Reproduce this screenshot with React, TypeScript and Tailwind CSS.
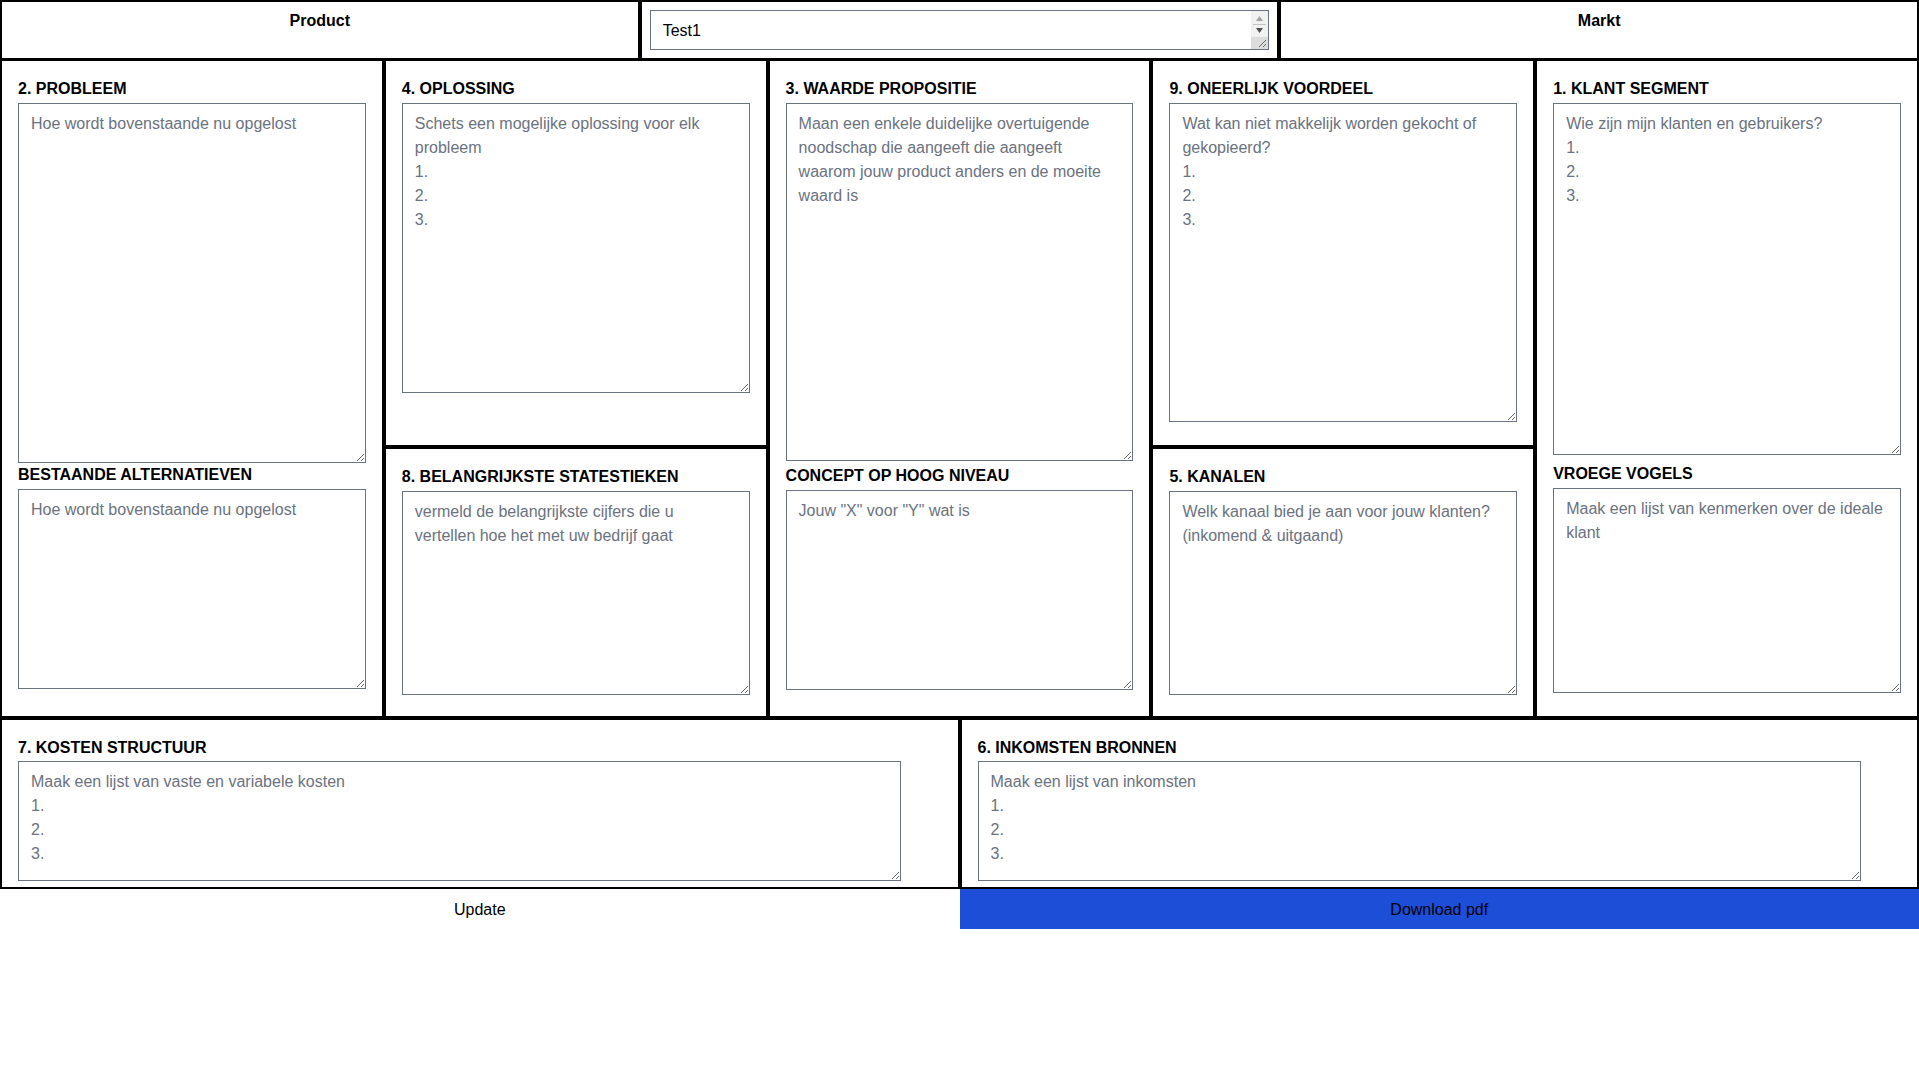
import React from 'react';

const boxCls =
  'block w-full border border-[#6b7280] bg-white px-3 py-2 text-base leading-6 text-black placeholder:text-[#6b7280] focus:outline-none';

function Field({
  label,
  placeholder,
  height,
}: {
  label: string;
  placeholder: string;
  height: string;
}) {
  return (
    <>
      <div className="h-6 text-base font-bold leading-6 text-black">{label}</div>
      <textarea className={`${boxCls} mt-0.5 ${height}`} placeholder={placeholder} />
    </>
  );
}

// classic scrollbar look of the name box (headless chrome hides its own)
function FakeScrollbar() {
  return (
    <div className="pointer-events-none absolute bottom-px right-px top-px flex w-[17px] flex-col bg-[#f1f1f1]">
      <div className="flex h-[11px] items-end justify-center">
        <svg width="7" height="5" viewBox="0 0 7 5">
          <path d="M3.5 0 L7 5 L0 5 Z" fill="#a3a3a3" />
        </svg>
      </div>
      <div className="mx-0.5 my-[3px] h-px bg-[#c4c4c4]" />
      <div className="flex h-[5px] items-start justify-center">
        <svg width="7" height="5" viewBox="0 0 7 5">
          <path d="M0 0 L7 0 L3.5 5 Z" fill="#505050" />
        </svg>
      </div>
      <div className="mt-1 flex flex-1 items-end justify-end bg-[#dcdcdc] p-px">
        <svg width="10" height="10" viewBox="0 0 10 10">
          <path d="M9 2 L2 9 M9 6 L6 9" stroke="#6b6b6b" strokeWidth="1" />
        </svg>
      </div>
    </div>
  );
}

export default function App() {
  return (
    <div className="min-h-screen w-full bg-white font-['Liberation_Sans',Arial,sans-serif] text-black">
      {/* header row */}
      <div className="grid h-[59px] grid-cols-3">
        <div className="border-2 border-black pt-[7px] text-center text-base font-bold leading-6">Product</div>
        <div className="border-2 border-black p-2">
          <div className="relative">
            <textarea
              className="block h-10 w-full resize overflow-hidden border border-[#6b7280] bg-white py-2 pl-3 pr-6 text-base leading-6 text-black focus:outline-none"
              defaultValue="Test1"
            />
            <FakeScrollbar />
          </div>
        </div>
        <div className="border-2 border-black pt-[7px] text-center text-base font-bold leading-6">Markt</div>
      </div>

      {/* canvas */}
      <div className="grid h-[659px] grid-cols-5">
        <div className="flex flex-col border-2 border-black p-4">
          <Field label="2. PROBLEEM" placeholder="Hoe wordt bovenstaande nu opgelost" height="h-[360px]" />
          <Field label="BESTAANDE ALTERNATIEVEN" placeholder="Hoe wordt bovenstaande nu opgelost" height="h-[200px]" />
        </div>

        <div className="flex flex-col">
          <div className="h-[388px] border-2 border-black p-4">
            <Field
              label="4. OPLOSSING"
              placeholder={'Schets een mogelijke oplossing voor elk probleem\n1.\n2.\n3.'}
              height="h-[290px]"
            />
          </div>
          <div className="flex-1 border-2 border-black p-4">
            <Field
              label="8. BELANGRIJKSTE STATESTIEKEN"
              placeholder="vermeld de belangrijkste cijfers die u vertellen hoe het met uw bedrijf gaat"
              height="h-[204px]"
            />
          </div>
        </div>

        <div className="flex flex-col border-2 border-black p-4">
          <Field
            label="3. WAARDE PROPOSITIE"
            placeholder="Maan een enkele duidelijke overtuigende noodschap die aangeeft die aangeeft waarom jouw product anders en de moeite waard is"
            height="h-[358px]"
          />
          <div className="pt-[3px]" />
          <Field label="CONCEPT OP HOOG NIVEAU" placeholder={'Jouw "X" voor "Y" wat is'} height="h-[200px]" />
        </div>

        <div className="flex flex-col">
          <div className="h-[388px] border-2 border-black p-4">
            <Field
              label="9. ONEERLIJK VOORDEEL"
              placeholder={'Wat kan niet makkelijk worden gekocht of gekopieerd?\n1.\n2.\n3.'}
              height="h-[319px]"
            />
          </div>
          <div className="flex-1 border-2 border-black p-4">
            <Field
              label="5. KANALEN"
              placeholder="Welk kanaal bied je aan voor jouw klanten? (inkomend & uitgaand)"
              height="h-[204px]"
            />
          </div>
        </div>

        <div className="flex flex-col border-2 border-black p-4">
          <Field
            label="1. KLANT SEGMENT"
            placeholder={'Wie zijn mijn klanten en gebruikers?\n1.\n2.\n3.'}
            height="h-[352px]"
          />
          <div className="pt-[7px]" />
          <Field
            label="VROEGE VOGELS"
            placeholder="Maak een lijst van kenmerken over de ideale klant"
            height="h-[205px]"
          />
        </div>
      </div>

      {/* costs / revenue */}
      <div className="grid h-[171px] grid-cols-2">
        <div className="border-2 border-black px-4 pt-4">
          <div className="h-6 text-base font-bold leading-6">7. KOSTEN STRUCTUUR</div>
          <textarea
            className={`${boxCls} mt-px h-[120px] !w-[883px]`}
            placeholder={'Maak een lijst van vaste en variabele kosten\n1.\n2.\n3.'}
          />
        </div>
        <div className="border-2 border-black px-4 pt-4">
          <div className="h-6 text-base font-bold leading-6">6. INKOMSTEN BRONNEN</div>
          <textarea
            className={`${boxCls} mt-px h-[120px] !w-[883px]`}
            placeholder={'Maak een lijst van inkomsten\n1.\n2.\n3.'}
          />
        </div>
      </div>

      {/* actions */}
      <div className="grid grid-cols-2">
        <button className="h-10 bg-white pt-px text-center text-base leading-6 text-black">Update</button>
        <button className="h-10 bg-[#1d4ed8] pt-px text-center text-base leading-6 text-black">Download pdf</button>
      </div>
    </div>
  );
}
